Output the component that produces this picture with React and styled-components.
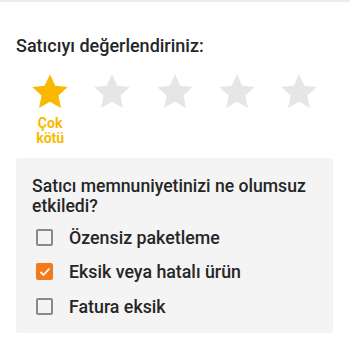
import React, { useState } from 'react'
import styled, { createGlobalStyle } from 'styled-components'

const GlobalStyle = createGlobalStyle`
  body {
    margin: 0;
    background: #fff;
    font-family: Roboto, "Noto Sans", sans-serif;
    color: #333;
  }
`

const labels = ['Çok kötü', 'Kötü', 'Orta', 'İyi', 'Çok iyi']

const reasons = [
  { id: 1, text: 'Özensiz paketleme' },
  { id: 2, text: 'Eksik veya hatalı ürün' },
  { id: 3, text: 'Fatura eksik' },
]

function Star({ active }) {
  return (
    <svg width="38" height="36" viewBox="0 0 24 23">
      <path
        d="M12 0.8l3.4 7.3 7.9 0.9-5.9 5.4 1.6 7.9L12 18.4l-7 3.9 1.6-7.9L0.7 9l7.9-0.9z"
        fill={active ? '#f9b900' : '#e6e6e6'}
      />
    </svg>
  )
}

function App() {
  const [rating] = useState(1)
  const [checked, setChecked] = useState({ 2: true })

  return (
    <>
      <GlobalStyle />
      <Page>
        <Title>Satıcıyı değerlendiriniz:</Title>
        <StarRow>
          {labels.map((label, i) => (
            <StarItem key={label}>
              <Star active={i < rating} />
              <StarLabel>{i + 1 === rating ? label : ''}</StarLabel>
            </StarItem>
          ))}
        </StarRow>
        <Panel>
          <Question>Satıcı memnuniyetinizi ne olumsuz etkiledi?</Question>
          <List>
            {reasons.map((item) => (
              <Row
                key={item.id}
                onClick={() => setChecked({ ...checked, [item.id]: !checked[item.id] })}
              >
                <Box $checked={!!checked[item.id]}>
                  {checked[item.id] && (
                    <svg width="12" height="10" viewBox="0 0 12 10">
                      <path d="M1.5 5l3 3 6-6.5" stroke="#fff" strokeWidth="1.8" fill="none" />
                    </svg>
                  )}
                </Box>
                <RowText>{item.text}</RowText>
              </Row>
            ))}
          </List>
        </Panel>
      </Page>
    </>
  )
}

const Page = styled.div`
  width: 350px;
  height: 350px;
  box-sizing: border-box;
  border-top: 2px solid #ececec;
  padding: 33px 17px 0 16px;
`

const Title = styled.h2`
  margin: 0;
  font-size: 18px;
  font-weight: 500;
  line-height: 22px;
  color: #262626;
`

const StarRow = styled.div`
  display: flex;
  margin: 16px 0 0 3px;
  height: 85px;
`

const StarItem = styled.div`
  width: 62.3px;
  display: flex;
  flex-direction: column;
  align-items: center;
`

const StarLabel = styled.div`
  width: 40px;
  margin-top: 7px;
  font-size: 14px;
  font-weight: 700;
  line-height: 15px;
  text-align: center;
  color: #f9b900;
`

const Panel = styled.div`
  background: #f4f4f4;
  border-radius: 3px;
  padding: 18px 14px 14px 16px;
  height: 175px;
  box-sizing: border-box;
`

const Question = styled.div`
  font-size: 17.6px;
  font-weight: 500;
  line-height: 20px;
  color: #262626;
`

const List = styled.div`
  display: flex;
  flex-direction: column;
  gap: 14.5px;
  margin-top: 11px;
`

const Row = styled.label`
  display: flex;
  align-items: center;
  gap: 16px;
  padding-left: 4px;
  cursor: pointer;
  height: 20px;
`

const Box = styled.span`
  width: 17px;
  height: 17px;
  box-sizing: border-box;
  border-radius: 2px;
  border: ${(p) => (p.$checked ? 'none' : '2px solid #8a8a8a')};
  background: ${(p) => (p.$checked ? '#f27a1a' : 'transparent')};
  display: flex;
  align-items: center;
  justify-content: center;
`

const RowText = styled.span`
  font-size: 17.8px;
  font-weight: 500;
  color: #262626;
`

export default App
